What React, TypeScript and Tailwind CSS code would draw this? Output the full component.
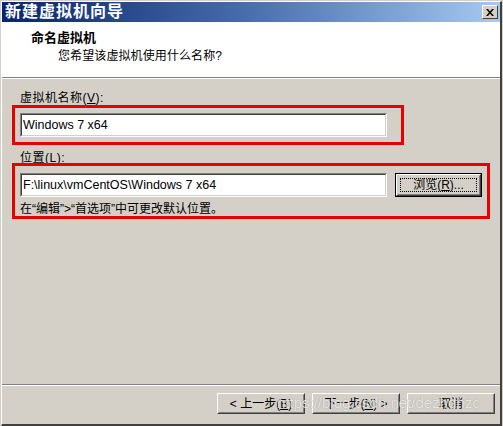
import { ReactNode } from 'react';

const font = "font-['Liberation_Sans','Noto_Sans_CJK_SC',sans-serif]";

function Sunken({ children, className = '' }: { children?: ReactNode; className?: string }) {
  // classic win2k sunken edit box
  return (
    <div className={`border border-t-[#808080] border-l-[#808080] border-b-white border-r-white ${className}`}>
      <div className="flex h-full items-center border border-t-[#404040] border-l-[#404040] border-b-[#d4d0c8] border-r-[#d4d0c8] bg-white pl-[1px] text-[12.5px] text-black">
        {children}
      </div>
    </div>
  );
}

function Button({ children, className = '', isDefault = false }: { children: ReactNode; className?: string; isDefault?: boolean }) {
  return (
    <div className={`${isDefault ? 'border border-black' : ''} ${className}`}>
      <div className="h-full border border-t-white border-l-white border-b-[#404040] border-r-[#404040]">
        <div className="flex h-full items-center justify-center border border-t-[#d4d0c8] border-l-[#d4d0c8] border-b-[#808080] border-r-[#808080] bg-[#d4d0c8] p-[2px]">
          <div
            className={`flex h-full w-full items-center justify-center text-[12px] text-black ${
              isDefault ? 'border border-dotted border-black' : ''
            }`}
          >
            {children}
          </div>
        </div>
      </div>
    </div>
  );
}

export default function App() {
  return (
    <div className={`relative h-[426px] w-[503px] overflow-hidden bg-[#d4d0c8] ${font}`}>
      <div className="flex h-full flex-col border-t border-l border-t-[#d4d0c8] border-l-[#d4d0c8] border-r border-r-[#d4d0c8]">
        <div className="flex h-full flex-col border-t border-l border-t-white border-l-white border-r-2 border-b-2 border-r-[#404040] border-b-[#404040]">
          {/* Title bar */}
          <div className="flex h-[20px] shrink-0 items-center justify-between bg-gradient-to-r from-[#0a246a] via-[#4a6fad] to-[#a6caf0] pl-[3px] pr-[2px]">
            <span className="text-[16px] font-bold leading-[20px] tracking-[1px] text-white">新建虚拟机向导</span>
            <div className="flex h-[14px] w-[16px] items-center justify-center border border-t-white border-l-white border-b-[#404040] border-r-[#404040] bg-[#d4d0c8]">
              <svg width="8" height="7" viewBox="0 0 8 7">
                <path d="M0 0h2l2 2.5L6 0h2L5 3.5 8 7H6L4 4.5 2 7H0l3-3.5z" fill="black" />
              </svg>
            </div>
          </div>

          {/* Header */}
          <div className="h-[55px] shrink-0 bg-white pt-[8px]">
            <div className="pl-[29px] text-[13px] font-bold leading-[16px] text-black">命名虚拟机</div>
            <div className="mt-[2px] pl-[56px] text-[12px] leading-[16px] tracking-[0.1px] text-black">
              您希望该虚拟机使用什么名称?
            </div>
          </div>
          <div className="h-[2px] shrink-0 border-t border-b border-t-[#808080] border-b-white" />

          {/* Body */}
          <div className="flex flex-1 flex-col pl-[18px] pt-[12px]">
            <div className="text-[12px] leading-[14px] tracking-[0.5px] text-black">
              虚拟机名称(<span className="underline">V</span>):
            </div>
            <Sunken className="mt-[8px] h-[24px] w-[367px]">Windows 7 x64</Sunken>

            <div className="mt-[14px] text-[12px] leading-[14px] tracking-[0.5px] text-black">
              位置(<span className="underline">L</span>):
            </div>
            <div className="mt-[8px] flex items-center gap-[8px]">
              <Sunken className="h-[24px] w-[367px]">F:\linux\vmCentOS\Windows 7 x64</Sunken>
              <Button isDefault className="h-[24px] w-[87px]">
                浏览(<span className="underline">R</span>)...
              </Button>
            </div>
            <div className="mt-[5px] text-[12px] leading-[14px] text-black">在“编辑”&gt;“首选项”中可更改默认位置。</div>
          </div>

          {/* Footer */}
          <div className="h-[2px] shrink-0 border-t border-b border-t-[#808080] border-b-white" />
          <div className="flex h-[38px] shrink-0 justify-end gap-[7px] pr-[5px] pt-[7px]">
            <Button className="h-[21px] w-[88px]">&lt; 上一步(<span className="underline">B</span>)</Button>
            <Button className="h-[21px] w-[88px]">下一步(<span className="underline">N</span>) &gt;</Button>
            <Button className="h-[21px] w-[88px]">取消</Button>
          </div>
        </div>
      </div>

      {/* red annotation boxes */}
      <div className="absolute left-[12px] top-[105px] h-[40px] w-[392px] border-[3px] border-[#e60000]" />
      <div className="absolute left-[12px] top-[163px] h-[56px] w-[478px] border-[3px] border-[#e60000]" />

      {/* watermark */}
      <div className="absolute left-[277px] top-[394px] text-[15px] leading-[18px] text-white/75 [text-shadow:0_0_1px_rgba(110,110,110,0.7)]">
        https://blog.csdn.net/dezhdhzc
      </div>
    </div>
  );
}
